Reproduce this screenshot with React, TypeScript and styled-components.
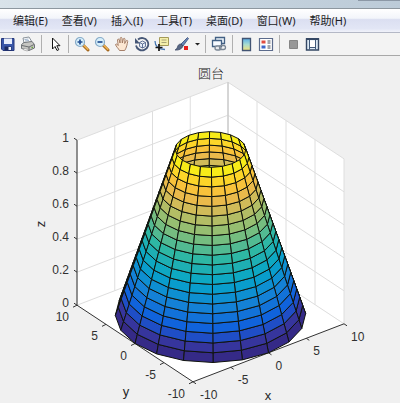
import React from "react";
import styled, { createGlobalStyle } from "styled-components";

const GlobalStyle = createGlobalStyle`
  * { box-sizing: border-box; }
  body { margin: 0; background: #f0f0f0; overflow-x: hidden; }
`;

const Window = styled.div`
  display: flex;
  flex-direction: column;
  min-height: 100vh;
  overflow: hidden;
  background: #f0f0f0;
  color: #222;
  font-family: "Noto Sans", "Noto Sans CJK SC", sans-serif;
`;

const TitleBar = styled.header`
  display: flex;
  justify-content: flex-end;
  height: 9px;
  background: linear-gradient(90deg, #d9e3ea, #c9d6e0 40%, #bccbd8);
  border-bottom: 1px solid #8d979f;
`;

const WindowControls = styled.div`
  width: 42px;
  height: 1px;
  background: #8c98a6;
`;

const MenuBar = styled.nav`
  display: flex;
  align-items: center;
  gap: 14px;
  height: 24px;
  padding: 0 13px;
  background: linear-gradient(#ffffff 0, #f3f5fb 40%, #dbdff1 46%, #e2e6f5 85%, #f0f2fa);
  border-bottom: 1px solid #b4b8c6;
`;

const MenuItem = styled.button`
  padding: 0;
  border: 0;
  background: none;
  color: #1c1c24;
  font: inherit;
  font-size: 11px;
  line-height: 16px;
  white-space: nowrap;
`;

const Toolbar = styled.div`
  display: flex;
  align-items: center;
  height: 23px;
  margin-left: -2px;
  background: #f3f3f3;
  border-bottom: 1px solid #a8a8a8;
`;

const ToolButton = styled.button<{ $narrow?: boolean }>`
  display: flex;
  flex: none;
  align-items: center;
  justify-content: center;
  width: ${(p) => (p.$narrow ? 10 : 20)}px;
  height: 20px;
  padding: 0;
  border: 0;
  background: none;
`;

const Separator = styled.span`
  flex: none;
  width: 1px;
  height: 18px;
  margin: 0 3px;
  background: #b0b0b0;
`;

const Figure = styled.main`
  flex: 1;
`;

const Plot = styled.svg`
  display: block;
  width: 100%;
  height: auto;
  font-family: "Liberation Sans", Arial, sans-serif;
`;

const TickText = styled.text`
  font-size: 12px;
  fill: #303030;
`;

const AxisText = styled.text`
  font-size: 13px;
  fill: #262626;
  text-anchor: middle;
`;

const TitleText = styled.text`
  font-family: "Noto Sans CJK SC", sans-serif;
  font-size: 13px;
  font-weight: 300;
  fill: #202020;
  text-anchor: middle;
`;

const Icon = ({ children, w = 16 }: { children: React.ReactNode; w?: number }) => (
  <svg width={w} height={16} viewBox={`0 0 ${w} 16`} fill="none" aria-hidden="true">
    {children}
  </svg>
);

const SaveIcon = () => (
  <Icon>
    <path d="M1.500 2.500h12.500v12H3l-1.500-1.500z" fill="#3a57a8" stroke="#26387c" />
    <path d="M4 2.500h8v5.500H4z" fill="#e8eefb" />
    <path d="M4.500 10.500h7v4h-7z" fill="#1d2b61" />
    <path d="M8.500 11h2.500v3H8.500z" fill="#eef2fb" />
  </Icon>
);

const PrintIcon = () => (
  <Icon>
    <path d="M4 7 3 2l6-1 3 5z" fill="#fff" stroke="#8a939c" />
    <path d="M4.500 3.500 8.500 3M5 5l4-.500" stroke="#9cb0c8" />
    <path d="M1.500 8.500 4 6.500l8-1 2.500 3V12L9 14.500l-7.500-2z" fill="#c6c6c2" stroke="#707478" />
    <path d="M2 9.500 9 11l5-2.500M9 11v3" stroke="#6a6d70" />
    <path d="m4 12.500 4.500 1-1 1.500-4-1z" fill="#fff" stroke="#909090" strokeWidth=".6" />
    <path d="M11.500 11.500h1.500" stroke="#6aa33c" strokeWidth="1.500" />
  </Icon>
);

const PointerIcon = () => (
  <Icon>
    <path d="M5.500 2v11l2.500-2.500 2 4 1.800-.8-2-4H13z" fill="#fff" stroke="#151515" strokeLinejoin="round" />
  </Icon>
);

const ZoomIcon = ({ plus }: { plus?: boolean }) => (
  <Icon>
    <path d="m9 9 5 5" stroke="#a66a20" strokeWidth="3" strokeLinecap="round" />
    <path d="m9.500 9 4.300 4.300" stroke="#efb250" strokeWidth="1.500" strokeLinecap="round" />
    <circle cx="6" cy="6" r="4.500" fill="#d7effa" stroke="#86aac8" strokeWidth="1.200" />
    <path d={plus ? "M3.500 6h5M6 3.500v5" : "M3.500 6h5"} stroke="#234d91" strokeWidth="1.700" />
  </Icon>
);

const HandIcon = () => (
  <Icon>
    <path
      d="M5.500 14.500C4.500 12.500 2 10.500 1.500 8.500c.5-1 1.700-.5 2.700 1L3.500 4c.2-1.200 1.400-1.200 1.800 0L6 7l.2-4.700c.2-1.200 1.600-1.200 1.800 0L8.300 7l1-4c.4-1.100 1.700-.8 1.700.4L10.700 7.500l1.500-2.700c.6-.9 1.700-.4 1.500.7-.5 2.500-1 6-3 9z"
      fill="#fce7d2"
      stroke="#9c745c"
      strokeWidth=".9"
      strokeLinejoin="round"
    />
  </Icon>
);

const RotateIcon = () => (
  <Icon>
    <path d="M4 3.500A6.200 6.200 0 1 1 2 9.500" stroke="#465777" strokeWidth="1.800" />
    <path d="M1 2v5.500h5z" fill="#465777" />
    <path d="m5.500 6.500 3-1.500 3 1.500v4l-3 1.500-3-1.500zM5.500 6.500l3 1.500 3-1.500M8.500 8v4" fill="#e5edf8" stroke="#53678c" strokeWidth=".9" />
  </Icon>
);

const CursorIcon = () => (
  <Icon>
    <path d="M5.500 1.500h9v8h-9z" fill="#f4efaa" stroke="#a49a58" />
    <path d="M7.500 4h5M7.500 6.500h5" stroke="#a9a478" />
    <path d="M1 5c0 5 3.500 8.500 10 8.500" stroke="#4678b3" strokeWidth="1.300" />
    <path d="M5 8v7M1.500 11.500h7" stroke="#151515" strokeWidth="1.700" />
  </Icon>
);

const BrushIcon = () => (
  <Icon>
    <path d="m7 8 6.500-6.500 1 1L9 10z" fill="#6684b5" stroke="#3a4e79" strokeWidth=".8" />
    <path d="M7 8c-2 0-3 1-3.500 3-.4 1.500-1.300 2.300-2.500 3 3.500.5 7-.8 8-4z" fill="#576784" stroke="#35415f" strokeWidth=".7" />
    <path d="M10 10h4v4h-4z" fill="#e81c1c" />
  </Icon>
);

const LinkIcon = () => (
  <Icon>
    <path d="M4.500 1.500h9v6h-9z" fill="#edf4fb" stroke="#426084" strokeWidth="1.300" />
    <path d="M1.500 4.500h9v6h-9z" fill="#f6faff" stroke="#426084" strokeWidth="1.300" />
    <rect x="4" y="10" width="6" height="4" rx="2" fill="#e7e9ed" stroke="#7b8795" strokeWidth="1.300" />
    <rect x="8.500" y="9.500" width="6" height="4" rx="2" stroke="#7b8795" strokeWidth="1.300" />
  </Icon>
);

const ColorbarIcon = () => (
  <Icon>
    <defs>
      <linearGradient id="bar" x1="0" y1="0" x2="0" y2="1">
        <stop offset="0" stopColor="#5aaee8" />
        <stop offset=".5" stopColor="#a8dcd0" />
        <stop offset="1" stopColor="#f3e27a" />
      </linearGradient>
    </defs>
    <path d="M4.500 2.500h8v12h-8z" fill="url(#bar)" stroke="#425473" strokeWidth="1.300" />
  </Icon>
);

const LegendIcon = () => (
  <Icon>
    <path d="M1.500 2.500h13v12h-13z" fill="#fff" stroke="#5b6b8c" strokeWidth="1.200" />
    <path d="M3.500 4.500h4v3h-4z" fill="#e14c40" />
    <path d="M3.500 9.500h4v3h-4z" fill="#3f66c9" />
    <path d="M9.500 5h3M9.500 7h3M9.500 10h3M9.500 12h3" stroke="#444a58" />
  </Icon>
);

const HideToolsIcon = () => (
  <Icon>
    <path d="M4.500 4.500h8v8h-8z" fill="#989898" stroke="#858585" />
  </Icon>
);

const ShowToolsIcon = () => (
  <Icon>
    <path d="M1.500 3h12v11h-12z" fill="#dce9f4" stroke="#354864" strokeWidth="1.400" />
    <path d="M1 2h13v2H1z" fill="#354864" />
    <path d="M4.500 4v9.500M10.500 4v9.500M4.500 11.500h6" stroke="#415979" />
    <path d="M5 4.500h5V11H5z" fill="#fff" />
  </Icon>
);

const CaretIcon = () => (
  <Icon w={8}>
    <path d="M2 7h5L4.500 9.500z" fill="#222" />
  </Icon>
);

type Pt = [number, number];

const project = (x: number, y: number, z: number): Pt => [
  210.5 + 7.55 * x - 5.8 * y,
  314.5 - 2.9 * x - 3.83 * y - 165 * z,
];

const toPoints = (pts: Pt[]) => pts.map((p) => p.map((v) => v.toFixed(2)).join(",")).join(" ");

const PARULA: [number, number[]][] = [
  [0, [53, 42, 135]],
  [0.0625, [54, 56, 163]],
  [0.125, [15, 92, 221]],
  [0.25, [20, 129, 214]],
  [0.375, [6, 164, 202]],
  [0.5, [46, 183, 164]],
  [0.625, [135, 191, 119]],
  [0.75, [209, 187, 89]],
  [0.8125, [240, 186, 72]],
  [0.875, [254, 200, 50]],
  [0.9375, [248, 232, 28]],
  [1, [249, 251, 14]],
];

const parula = (t: number) => {
  const hi = Math.max(1, PARULA.findIndex(([at]) => at >= t));
  const [t0, c0] = PARULA[hi - 1];
  const [t1, c1] = PARULA[hi];
  const f = (t - t0) / (t1 - t0);
  return `rgb(${c0.map((v, k) => Math.round(v + (c1[k] - v) * f)).join(",")})`;
};

const SIDES = 20;
const ROWS = 20;

const buildFaces = () => {
  const faces: { points: string; fill: string; depth: number }[] = [];
  const radius = (row: number) => 10 - (2 * Math.PI * row) / ROWS;
  const vertex = (row: number, side: number): Pt => {
    const a = (2 * Math.PI * side) / SIDES;
    return project(radius(row) * Math.cos(a), radius(row) * Math.sin(a), row / ROWS);
  };
  for (let row = 0; row < ROWS; row++) {
    for (let side = 0; side < SIDES; side++) {
      const mid = (2 * Math.PI * (side + 0.5)) / SIDES;
      const facing = -0.609 * Math.cos(mid) - 0.793 * Math.sin(mid);
      faces.push({
        points: toPoints([vertex(row, side), vertex(row, side + 1), vertex(row + 1, side + 1), vertex(row + 1, side)]),
        fill: parula(row / ROWS),
        depth: facing,
      });
    }
  }
  return faces.sort((a, b) => a.depth - b.depth);
};

const FACES = buildFaces();

const Line = ({ a, b, color, w = 1 }: { a: Pt; b: Pt; color: string; w?: number }) => (
  <line x1={a[0]} y1={a[1]} x2={b[0]} y2={b[1]} stroke={color} strokeWidth={w} />
);

const GRID = "#dedede";
const AXIS = "#333";
const STEPS = [-10, -5, 0, 5, 10];
const LEVELS = [0, 0.2, 0.4, 0.6, 0.8, 1];

const shift = (p: Pt, dx: number, dy: number): Pt => [p[0] + dx, p[1] + dy];

const ConePlot = () => (
  <Plot viewBox="0 56 400 347" role="img" aria-label="圆台">
    <TitleText x="211" y="78">圆台</TitleText>
    <polygon points={toPoints([project(-10, 10, 0), project(-10, 10, 1), project(10, 10, 1), project(10, 10, 0)])} fill="#fff" />
    <polygon points={toPoints([project(10, 10, 0), project(10, 10, 1), project(10, -10, 1), project(10, -10, 0)])} fill="#fff" />
    <polygon points={toPoints([project(-10, 10, 0), project(10, 10, 0), project(10, -10, 0), project(-10, -10, 0)])} fill="#fff" />
    {STEPS.map((s) => (
      <g key={s}>
        <Line a={project(s, 10, 0)} b={project(s, 10, 1)} color={GRID} />
        <Line a={project(10, s, 0)} b={project(10, s, 1)} color={GRID} />
      </g>
    ))}
    {LEVELS.map((z) => (
      <g key={z}>
        <Line a={project(-10, 10, z)} b={project(10, 10, z)} color={GRID} />
        <Line a={project(10, 10, z)} b={project(10, -10, z)} color={GRID} />
      </g>
    ))}
    <Line a={project(10, 10, 0)} b={project(10, 10, 1)} color="#c4c4c4" />
    <Line a={project(-10, 10, 0)} b={project(-10, 10, 1)} color={AXIS} />
    <Line a={project(-10, 10, 0)} b={project(-10, -10, 0)} color={AXIS} />
    <Line a={project(-10, -10, 0)} b={project(10, -10, 0)} color={AXIS} />
    {LEVELS.map((z) => {
      const p = project(-10, 10, z);
      return <Line key={z} a={p} b={shift(p, -3, -2)} color={AXIS} />;
    })}
    {STEPS.map((s) => {
      const px = project(s, -10, 0);
      const py = project(-10, s, 0);
      return (
        <g key={s}>
          <Line a={px} b={shift(px, 3, 2)} color={AXIS} />
          <Line a={py} b={shift(py, -4, 2)} color={AXIS} />
        </g>
      );
    })}
    {FACES.map((f, i) => (
      <polygon key={i} points={f.points} fill={f.fill} stroke="#10130c" strokeWidth="1" strokeLinejoin="round" />
    ))}
    {LEVELS.map((z) => {
      const p = project(-10, 10, z);
      return (
        <TickText key={z} x={p[0] - 8} y={p[1] + 2} textAnchor="end">
          {z}
        </TickText>
      );
    })}
    {STEPS.map((s) => {
      const px = project(s, -10, 0);
      const py = project(-10, s, 0);
      return (
        <g key={s}>
          <TickText x={py[0] - 8} y={py[1] + 16} textAnchor="end">{s}</TickText>
          <TickText x={px[0] + 7} y={px[1] + 17}>{s}</TickText>
        </g>
      );
    })}
    <AxisText x="126" y="396">y</AxisText>
    <AxisText x="268" y="400">x</AxisText>
    <AxisText transform="translate(45 224) rotate(-90)">z</AxisText>
  </Plot>
);

const MENUS = ["编辑(E)", "查看(V)", "插入(I)", "工具(T)", "桌面(D)", "窗口(W)", "帮助(H)"];

export default function App() {
  return (
    <Window>
      <GlobalStyle />
      <TitleBar>
        <WindowControls />
      </TitleBar>
      <MenuBar>
        {MENUS.map((m) => (
          <MenuItem key={m}>{m}</MenuItem>
        ))}
      </MenuBar>
      <Toolbar role="toolbar">
        <ToolButton aria-label="保存"><SaveIcon /></ToolButton>
        <ToolButton aria-label="打印"><PrintIcon /></ToolButton>
        <Separator />
        <ToolButton aria-label="编辑绘图"><PointerIcon /></ToolButton>
        <Separator />
        <ToolButton aria-label="放大"><ZoomIcon plus /></ToolButton>
        <ToolButton aria-label="缩小"><ZoomIcon /></ToolButton>
        <ToolButton aria-label="平移"><HandIcon /></ToolButton>
        <ToolButton aria-label="三维旋转"><RotateIcon /></ToolButton>
        <ToolButton aria-label="数据游标"><CursorIcon /></ToolButton>
        <ToolButton aria-label="刷亮"><BrushIcon /></ToolButton>
        <ToolButton aria-label="刷亮选项" $narrow><CaretIcon /></ToolButton>
        <Separator />
        <ToolButton aria-label="链接绘图"><LinkIcon /></ToolButton>
        <Separator />
        <ToolButton aria-label="颜色栏"><ColorbarIcon /></ToolButton>
        <ToolButton aria-label="图例"><LegendIcon /></ToolButton>
        <Separator />
        <ToolButton aria-label="隐藏绘图工具"><HideToolsIcon /></ToolButton>
        <ToolButton aria-label="显示绘图工具"><ShowToolsIcon /></ToolButton>
      </Toolbar>
      <Figure>
        <ConePlot />
      </Figure>
    </Window>
  );
}
